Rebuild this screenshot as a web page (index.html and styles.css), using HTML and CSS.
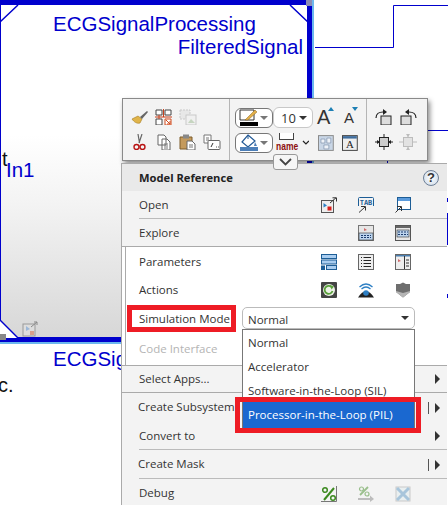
FILE: index.html
```html
<!DOCTYPE html>
<html lang="en">
<head>
    <meta charset="UTF-8">
    <meta name="viewport" content="width=device-width, initial-scale=1.0">
    <title>Model Reference menu</title>
    <link rel="stylesheet" href="styles.css">
</head>
<body>
<div class="stage">

    <!-- diagram behind the menu -->
    <div class="block">
        <svg class="corners" width="316" height="345" viewBox="0 0 316 345">
            <path d="M0 22 L18 5 M290 5 L310 24" stroke="#0000cd" stroke-width="1.5" fill="none"/>
            <path d="M0 320 L18 338 L0 338 Z" fill="#fff"/>
            <path d="M0 320 L18 338" stroke="#0000cd" stroke-width="1.5" fill="none"/>
        </svg>
        <div class="block-name">ECGSignalProcessing</div>
        <div class="block-port">FilteredSignal</div>
        <svg class="ref-badge" width="17" height="16" viewBox="0 0 17 16">
            <rect x="1" y="3" width="12" height="12" fill="#ddd" stroke="#999"/>
            <path d="M4 5 L8 8 L4 10 Z" fill="#9db8d8"/>
            <rect x="8" y="10" width="4" height="4" fill="#d9a08c"/>
            <path d="M9 6 L15 1 M12 1 H15 V4" stroke="#888" fill="none"/>
        </svg>
        <span class="handle handle-tr"></span>
        <span class="handle handle-bl"></span>
    </div>
    <div class="in-label">In1</div>
    <div class="cut-text cut-t">t</div>
    <div class="name-below">ECGSignalProcessing</div>
    <div class="cut-text cut-c">c.</div>
    <svg class="wires" width="448" height="505" viewBox="0 0 448 505">
        <path d="M315 47.5 H393.5 V5.5 H448 M428 130.5 H448 M387.5 160 V164 M447.5 198 V202 M447.5 294 V298" stroke="#0000cd" fill="none"/>
        <path d="M447.5 213 V245" stroke="#0000cd" stroke-width="2" fill="none"/>
    </svg>

    <!-- floating format toolbar -->
    <div class="toolbar">
        <div class="tool-group group-edit">
            <svg class="ti" viewBox="0 0 18 16"><path d="M7 7 L1 10 C3 13 6 15 9 14 L11 10 Z" fill="#e0b44a" stroke="#a67c20" stroke-width=".6"/><path d="M9 8 L16 2 L17 3 L11 10 Z" fill="#666"/></svg>
            <svg class="ti" viewBox="0 0 18 16"><path d="M1 6 H7 V1 H1 Z M10 1 H16 V6 H10 Z M1 10 H7 V16 H1 Z" fill="#fff" stroke="#444"/><path d="M8.5 0 V8 M0 8 H17 M4 6 V10" stroke="#c8401c" fill="none"/><path d="M10 10 H16 V16 H10 Z" fill="#fff" stroke="#d04a1c"/><path d="M11 11 L15 15 M12 15 H15 V12" stroke="#d04a1c" fill="none"/></svg>
            <svg class="ti ti-off" viewBox="0 0 18 16"><path d="M1 1 H11 V10 H1 Z" fill="#e4e4e4" stroke="#bbb" stroke-dasharray="2 1"/><rect x="7" y="6" width="10" height="10" fill="#f0f0f0" stroke="#bbb"/><path d="M9 14 L12 10 L16 14 Z" fill="#b8ccb0"/></svg>
            <span class="ti"></span>
            <svg class="ti" viewBox="0 0 18 16"><path d="M11 0 L8 9 M7 0 L8.5 9" stroke="#666" stroke-width="1.2" fill="none"/><circle cx="5.5" cy="13" r="2.5" fill="none" stroke="#b81414" stroke-width="1.4"/><circle cx="11.5" cy="13" r="2.5" fill="none" stroke="#b81414" stroke-width="1.4"/></svg>
            <svg class="ti" viewBox="0 0 18 16"><path d="M3 1 H9 L11 3 V11 H3 Z M7 5 H12 L15 8 V16 H7 Z" fill="#fff" stroke="#666"/><path d="M9 10 H13 M9 12 H13 M9 14 H13" stroke="#777"/></svg>
            <svg class="ti" viewBox="0 0 18 16"><path d="M1 3 H13 V15 H1 Z" fill="#c49a5c" stroke="#7d5c2a"/><rect x="4" y="0.5" width="6" height="4" fill="#888"/><path d="M8 7 H13 L16 10 V16 H8 Z" fill="#fff" stroke="#666"/><path d="M10 11 H14 M10 13 H14" stroke="#777"/></svg>
            <svg class="ti" viewBox="0 0 18 16"><path d="M1 1 H8 V9 H1 Z" fill="#fff" stroke="#777"/><path d="M3 4 H6 M3 6 H6" stroke="#777"/><rect x="5" y="6.5" width="12" height="9" rx="1" fill="#fff" stroke="#666"/><path d="M8 13 L10 9 M13 13 H13.8 M15 13 H15.8" stroke="#333"/></svg>
        </div>
        <div class="tool-group group-format">
            <div class="tool-row">
                <div class="pick">
                    <svg width="20" height="18" viewBox="0 0 20 18"><path d="M1 1 H15 V11 H1 Z" fill="#fff" stroke="#333"/><path d="M6 11 L16 1 L18 3 L9 11 Z" fill="#e2b04a" stroke="#8a6420" stroke-width=".5"/><rect x="1" y="13" width="18" height="4" fill="#000"/></svg>
                    <span class="caret"></span>
                </div>
                <div class="pick pick-size"><span>10</span><span class="caret caret-dark"></span></div>
                <div class="font-btn">A<span class="up"></span></div>
                <div class="font-btn font-small">A<span class="down"></span></div>
            </div>
            <div class="tool-row">
                <div class="pick">
                    <svg width="20" height="18" viewBox="0 0 20 18"><path d="M9 1 L16 7 L9 13 L3 8 Z" fill="#fff" stroke="#245a96" stroke-width="1.2"/><path d="M9 5 V1" stroke="#245a96"/><rect x="1" y="13" width="18" height="4" fill="#4d7fb8"/><path d="M16 8 L18 12 H15 Z" fill="#4d7fb8"/></svg>
                    <span class="caret"></span>
                </div>
                <div class="name-btn"><span class="name-box"></span><span class="name-text">name</span></div>
                <svg class="mini-chev" width="8" height="5" viewBox="0 0 8 5"><path d="M1 1 L4 4 L7 1" stroke="#222" stroke-width="1.2" fill="none"/></svg>
                <svg class="ti sq" viewBox="0 0 16 16"><rect x=".5" y=".5" width="15" height="15" fill="#c9d6e6" stroke="#8a8a8a"/><path d="M3 4 H7 V8 H3 Z M9 3 H13 V8 H9 Z M6 10 H11 V14 H6 Z" fill="#eef2f8" stroke="#7d90aa" stroke-width=".7"/></svg>
                <svg class="ti sq" viewBox="0 0 16 16"><rect x=".5" y=".5" width="15" height="15" fill="#eee" stroke="#444"/><rect x="1" y="1" width="14" height="2.5" fill="#3f6d9e"/><text x="8" y="13.5" class="svg-a">A</text></svg>
            </div>
        </div>
        <div class="tool-group group-rotate">
            <svg class="ti" viewBox="0 0 18 16"><rect x="6" y="7" width="10" height="9" fill="#ddd" stroke="#222"/><path d="M1 9 C1 5 4 3 8 3" stroke="#222" stroke-width="1.2" fill="none"/><path d="M8 0 L12 3 L8 6 Z" fill="#222"/></svg>
            <svg class="ti" viewBox="0 0 18 16"><rect x="2" y="7" width="10" height="9" fill="#ddd" stroke="#222"/><path d="M17 9 C17 5 14 3 10 3" stroke="#222" stroke-width="1.2" fill="none"/><path d="M10 0 L6 3 L10 6 Z" fill="#222"/></svg>
            <svg class="ti" viewBox="0 0 18 16"><rect x="4.5" y="3.5" width="9" height="9" fill="#ccc" stroke="#222"/><path d="M9 0 V3 M9 13 V16 M0 8 H4 M14 8 H18" stroke="#222"/><path d="M2 6 L5 8 L2 10 Z M16 6 L13 8 L16 10 Z" fill="#222"/></svg>
            <svg class="ti ti-off" viewBox="0 0 18 16"><rect x="4.5" y="3.5" width="9" height="9" fill="#ddd" stroke="#aaa"/><path d="M9 0 V3 M9 13 V16 M0 8 H4 M14 8 H18" stroke="#aaa"/><path d="M7 0 H11 L9 3 Z M7 16 H11 L9 13 Z" fill="#aaa"/></svg>
        </div>
    </div>

    <!-- context menu -->
    <div class="menu">
        <div class="menu-head">
            <span>Model Reference</span>
            <span class="help">?</span>
        </div>
        <div class="menu-row row-open">
            <span class="label">Open</span>
            <svg class="mi" viewBox="0 0 16 16"><rect x=".5" y="3.5" width="12" height="12" fill="#eee" stroke="#555"/><path d="M2.5 6 L6 8.5 L2.5 10.5 Z" fill="#2d7fc4"/><rect x="6.5" y="9.5" width="4" height="4" fill="#d8201c"/><path d="M9 6 L15 .8 M11.5 .8 H15.5 V4.5" stroke="#333" fill="none"/></svg>
            <svg class="mi" viewBox="0 0 16 16"><path d="M.5 9 V1.5 Q.5 .5 1.5 .5 H14.5 Q15.5 .5 15.5 1.5 V9" stroke="#1d5d96" fill="none"/><text x="8" y="7.5" class="svg-tab">TAB</text><path d="M1 15.5 L7 10 M3 9.5 H7.5 V13.5" stroke="#333" fill="none"/></svg>
            <svg class="mi" viewBox="0 0 16 16"><rect x="2.5" y=".5" width="13" height="12" fill="#fff" stroke="#1d5d96"/><rect x="3" y="1" width="12" height="3" fill="#5b9bdc"/><path d="M.5 15.5 L6 10 M2 9.5 H6.5 V14" stroke="#333" fill="none"/></svg>
        </div>
        <div class="menu-row row-explore">
            <span class="label">Explore</span>
            <span class="mi"></span>
            <svg class="mi" viewBox="0 0 16 16"><rect x=".5" y=".5" width="15" height="15" fill="#e6e6e6" stroke="#777"/><path d="M6 3 L9 5 L6 6 Z" fill="#d06a6a"/><rect x="1" y="8" width="14" height="7" fill="#bcd4ee" stroke="#333" stroke-width=".6"/><path d="M3 10.5 H13 M3 12.5 H13" stroke="#1d3d6e" stroke-dasharray="2 1"/></svg>
            <svg class="mi" viewBox="0 0 16 16"><rect x=".5" y=".5" width="15" height="15" fill="#e6e6e6" stroke="#555"/><rect x="1" y="1" width="14" height="2" fill="#666"/><rect x="2" y="5" width="12" height="7" fill="#bcd4ee" stroke="#333" stroke-width=".6"/><path d="M3 7 H13 M3 9.5 H13" stroke="#1d3d6e" stroke-dasharray="2 1"/></svg>
        </div>
        <div class="menu-panel">
            <div class="menu-row row-params">
                <span class="label">Parameters</span>
                <svg class="mi" viewBox="0 0 16 16"><rect x=".5" y=".5" width="15" height="4" fill="#a9cdf0" stroke="#1d5d96"/><rect x=".5" y="6" width="15" height="4" fill="#a9cdf0" stroke="#1d5d96"/><rect x="0" y="11.5" width="4" height="4.5" fill="#1d5d96"/><rect x="5.5" y="11.5" width="10" height="4" fill="#a9cdf0" stroke="#1d5d96"/></svg>
                <svg class="mi" viewBox="0 0 16 16"><rect x=".5" y=".5" width="15" height="15" fill="#eee" stroke="#666"/><path d="M3 3.5 H4 M5.5 3.5 H13 M3 6.5 H4 M5.5 6.5 H13 M3 9.5 H4 M5.5 9.5 H13 M3 12.5 H4 M5.5 12.5 H13" stroke="#222"/></svg>
                <svg class="mi" viewBox="0 0 16 16"><rect x=".5" y=".5" width="15" height="15" fill="#eee" stroke="#666"/><rect x="1" y="1" width="14" height="1.5" fill="#4a7fb0"/><path d="M3 5 L6 7 L3 8 Z" fill="#d06a6a"/><path d="M9.5 2 V15 M11 6 H14 M11 9 H14 M11 12 H14" stroke="#333"/></svg>
            </div>
            <div class="menu-row row-actions">
                <span class="label">Actions</span>
                <svg class="mi" viewBox="0 0 16 16"><rect width="16" height="16" rx="1" fill="#444"/><circle cx="8" cy="8" r="6" fill="#eef3e8"/><path d="M11.5 9 A4 4 0 1 1 10.5 5" stroke="#5aa03c" stroke-width="1.8" fill="none"/><path d="M9 3 L13 4.5 L10.5 7.5 Z" fill="#5aa03c"/></svg>
                <svg class="mi" viewBox="0 0 16 16"><path d="M1.5 5 Q8 -1 14.5 5 M3.5 7 Q8 3 12.5 7" stroke="#2d7fc4" stroke-width="1.3" fill="none"/><path d="M0 15.5 Q8 3 16 15.5 Z" fill="#222"/><circle cx="8" cy="11" r="2.8" fill="#2d7fc4"/></svg>
                <svg class="mi" viewBox="0 0 16 16"><path d="M1 2 L5 2 L8 .5 L11 2 L15 2 V10 L8 15.5 L1 10 Z" fill="#6e6e6e"/><path d="M1 9 L8 11 L15 9 V10 L8 15.5 L1 10 Z" fill="#b5b5b5"/></svg>
            </div>
            <div class="menu-row row-mode"><span class="label">Simulation Mode</span></div>
            <div class="menu-row row-code"><span class="label label-off">Code Interface</span></div>
        </div>
        <div class="menu-row row-apps">
            <span class="label">Select Apps...</span>
            <span class="arrow"></span>
        </div>
        <div class="menu-row row-sub row-split">
            <span class="label label-tight">Create Subsystem</span>
            <span class="arrow"></span>
        </div>
        <div class="menu-row row-convert">
            <span class="label">Convert to</span>
            <span class="arrow"></span>
        </div>
        <div class="menu-row row-mask row-split">
            <span class="label label-tight">Create Mask</span>
            <span class="arrow"></span>
        </div>
        <div class="menu-row row-debug">
            <span class="label">Debug</span>
            <svg class="mi" viewBox="0 0 16 16"><rect x=".5" y=".5" width="15" height="15" fill="#f4f4f4"/><path d="M15.5 0 V15.5 H0" stroke="#777" fill="none"/><path d="M3 14 L13 2" stroke="#3c8a20" stroke-width="2"/><circle cx="4" cy="4" r="2.3" fill="none" stroke="#3c8a20" stroke-width="1.5"/><circle cx="12" cy="12" r="2.3" fill="none" stroke="#3c8a20" stroke-width="1.5"/></svg>
            <svg class="mi ti-off" viewBox="0 0 16 16"><path d="M2 9 L10 1" stroke="#7cae6a" stroke-width="1.8"/><circle cx="3.5" cy="3" r="2" fill="none" stroke="#7cae6a" stroke-width="1.2"/><circle cx="9" cy="8" r="2" fill="none" stroke="#7cae6a" stroke-width="1.2"/><path d="M0 13 H12" stroke="#aaa" stroke-width="2"/><path d="M12 9.5 L16 13 L12 16 Z" fill="#aaa"/></svg>
            <svg class="mi ti-off" viewBox="0 0 16 16"><rect x="1" y="1" width="14" height="14" fill="#e6eef0" stroke="#bbb"/><path d="M2 2 L14 14 M14 2 L2 14" stroke="#8fb6d4" stroke-width="3"/></svg>
        </div>
    </div>

    <div class="chevron-tab">
        <svg width="13" height="8" viewBox="0 0 13 8"><path d="M1 1 L6.5 6.5 L12 1" stroke="#444" stroke-width="1.8" fill="none"/></svg>
    </div>

    <!-- open combo with its list -->
    <div class="combo"><span>Normal</span><span class="caret caret-dark"></span></div>
    <ul class="combo-list">
        <li>Normal</li>
        <li>Accelerator</li>
        <li>Software-in-the-Loop (SIL)</li>
        <li class="selected">Processor-in-the-Loop (PIL)</li>
    </ul>

    <!-- red annotation boxes -->
    <div class="mark mark-label"></div>
    <div class="mark mark-item"></div>
</div>
</body>
</html>
```

FILE: styles.css
```css
html, body {
    margin: 0;
    padding: 0;
    background: #fff;
}

.stage {
    position: relative;
    width: 448px;
    height: 505px;
    overflow: hidden;
    font-family: "Open Sans", "Noto Sans", sans-serif;
    font-size: 11.5px;
    color: #333;
}

/* diagram */
.block {
    position: absolute;
    left: 0;
    top: 0;
    box-sizing: border-box;
    width: 312px;
    height: 342px;
    border-top: 5px solid #0000cd;
    border-bottom: 5px solid #0000cd;
    border-right: 5px solid #0000cd;
    border-left: 1px solid #0000cd;
    box-shadow: 2px 0 0 #6cb8ee, 0 2px 0 #6cb8ee;
    background: linear-gradient(#fff 0, #fff 130px, #f3f3f3 200px, #d6d6d6 337px);
    font-family: "Liberation Sans", Arial, sans-serif;
    font-size: 20.5px;
    color: #0000cd;
}

.corners {
    position: absolute;
    left: -1px;
    top: -5px;
}

.block-name {
    position: absolute;
    left: 52px;
    top: 7px;
    white-space: nowrap;
}

.block-port {
    position: absolute;
    right: 4px;
    top: 30px;
    white-space: nowrap;
}

.ref-badge {
    position: absolute;
    left: 21px;
    top: 316px;
}

.handle {
    position: absolute;
    width: 6px;
    height: 6px;
    background: #8c8cb4;
}

.handle-tr {
    right: -5px;
    top: -5px;
}

.handle-bl {
    left: -1px;
    bottom: -3px;
    background: #888;
}

.in-label,
.name-below {
    position: absolute;
    font-family: "Liberation Sans", Arial, sans-serif;
    font-size: 20.5px;
    color: #0000cd;
    white-space: nowrap;
}

.in-label {
    left: 6px;
    top: 158px;
}

.name-below {
    left: 53px;
    top: 347px;
    width: 68px;
    overflow: hidden;
}

.cut-text {
    position: absolute;
    font-family: "Liberation Sans", Arial, sans-serif;
    font-size: 20px;
    color: #111;
}

.cut-t {
    left: 2px;
    top: 148px;
}

.cut-c {
    left: -2px;
    top: 374px;
}

.wires {
    position: absolute;
    left: 0;
    top: 0;
}

/* toolbar */
.toolbar {
    position: absolute;
    left: 122px;
    top: 98px;
    width: 306px;
    height: 63px;
    box-sizing: border-box;
    display: flex;
    background: #f3f3f3;
    border: 1px solid #8a8a8a;
    box-shadow: 2px 3px 5px rgba(0, 0, 0, 0.45);
}

.tool-group {
    box-sizing: border-box;
    height: 100%;
    padding-top: 10px;
    border-right: 1px solid #b5b5b5;
}

.group-edit {
    width: 107px;
    padding-left: 8px;
    display: grid;
    grid-template-columns: repeat(4, 24px);
    grid-template-rows: 16px 16px;
    row-gap: 9px;
}

.group-format {
    width: 137px;
    padding-left: 5px;
    padding-top: 8px;
    display: flex;
    flex-direction: column;
    gap: 4px;
}

.group-rotate {
    width: 60px;
    padding-left: 8px;
    border-right: none;
    display: grid;
    grid-template-columns: repeat(2, 24px);
    grid-template-rows: 16px 16px;
    row-gap: 9px;
}

.ti {
    display: block;
    width: 18px;
    height: 16px;
}

.ti-off {
    opacity: 0.75;
}

.tool-row {
    display: flex;
    align-items: center;
    height: 21px;
}

.pick {
    box-sizing: border-box;
    width: 38px;
    height: 20px;
    display: flex;
    align-items: center;
    justify-content: space-between;
    padding: 0 4px 0 3px;
    background: #fff;
    border: 1px solid #777;
    border-radius: 6px;
}

.pick-size {
    width: 40px;
    height: 21px;
    padding: 0 5px 0 7px;
    border-color: #c8c8c8;
    font-size: 13px;
}

.caret {
    width: 0;
    height: 0;
    border-left: 4px solid transparent;
    border-right: 4px solid transparent;
    border-top: 4px solid #777;
}

.caret-dark {
    border-top-color: #333;
}

.font-btn {
    position: relative;
    box-sizing: border-box;
    width: 24px;
    margin-left: 4px;
    padding-left: 0;
    font-family: "Liberation Sans", Arial, sans-serif;
    font-size: 20px;
    line-height: 21px;
    color: #333;
}

.font-small {
    font-size: 15px;
    margin-left: 0;
    padding-left: 3px;
}

.up,
.down {
    position: absolute;
    top: 0;
    left: 11px;
    width: 0;
    height: 0;
    border-left: 3px solid transparent;
    border-right: 3px solid transparent;
}

.up {
    border-bottom: 4px solid #1d7fb4;
}

.down {
    border-top: 4px solid #1d7fb4;
}

.name-btn {
    width: 16px;
    margin-left: 6px;
    display: flex;
    flex-direction: column;
    align-items: center;
}

.name-box {
    box-sizing: border-box;
    width: 15px;
    height: 7px;
    background: #fff;
    border: 1px solid #444;
    border-top: none;
}

.name-text {
    font-family: "Liberation Sans", Arial, sans-serif;
    font-size: 10px;
    line-height: 11px;
    margin-top: 1px;
    color: #8c0e0e;
    font-weight: bold;
    transform: scaleX(0.85);
}

.mini-chev {
    margin-left: 7px;
    margin-right: 9px;
}

.sq {
    width: 16px;
    margin-right: 8px;
}

.svg-a {
    font-family: "Liberation Serif", serif;
    font-size: 11px;
    text-anchor: middle;
    fill: #222;
}

.chevron-tab {
    position: absolute;
    left: 273px;
    top: 154px;
    width: 25px;
    height: 16px;
    box-sizing: border-box;
    display: flex;
    align-items: center;
    justify-content: center;
    background: #f6f6f6;
    border: 1px solid #999;
    border-radius: 3px;
}

/* context menu */
.menu {
    position: absolute;
    left: 121px;
    top: 163px;
    width: 326px;
    height: 345px;
    box-sizing: border-box;
    background: #f3f3f3;
    border-left: 1px solid #aaa;
    border-top: 1px solid #aaa;
}

.menu-head {
    height: 27px;
    display: flex;
    align-items: center;
    justify-content: space-between;
    padding: 0 8px 0 17px;
    background: #e9e9e9;
    font-size: 11.2px;
    font-weight: bold;
    color: #222;
}

.help {
    box-sizing: border-box;
    width: 16px;
    height: 16px;
    border-radius: 50%;
    background: radial-gradient(#fff, #c9d8e8);
    border: 1px solid #6d7f96;
    font-family: "Liberation Sans", Arial, sans-serif;
    font-size: 13px;
    font-weight: bold;
    line-height: 14px;
    text-align: center;
    color: #333;
}

.menu-row {
    position: relative;
    display: grid;
    grid-template-columns: 199px 37px 37px 37px;
    align-items: center;
    box-sizing: border-box;
}

.label {
    padding-left: 17px;
    margin-bottom: 2px;
    white-space: nowrap;
}

.label-tight {
    padding-left: 16px;
}

.label-off {
    color: #b4b4b4;
}

.mi {
    display: block;
    width: 16px;
    height: 16px;
}

.row-open {
    height: 28px;
}

.row-open::after,
.row-convert::after,
.row-mask::after {
    content: "";
    position: absolute;
    left: 17px;
    right: 0;
    bottom: 0;
    border-bottom: 1px solid #bbb;
}

.row-explore {
    height: 27px;
    padding-top: 1px;
}

.menu-panel {
    position: relative;
    box-sizing: border-box;
    height: 120px;
    padding-top: 1px;
    background: #fff;
    border-top: 1px solid #aaa;
    border-bottom: 1px solid #aaa;
}

.menu-panel::before {
    content: "";
    position: absolute;
    left: 3px;
    top: 0;
    bottom: 0;
    border-left: 1px solid #aaa;
}

.row-params {
    height: 28px;
}

.row-actions {
    height: 28px;
}

.row-mode {
    height: 30px;
}

.row-code {
    height: 31px;
}

.row-apps {
    height: 27px;
    border-bottom: 1px solid #aaa;
}

.row-sub {
    height: 29px;
}

.row-convert {
    height: 28px;
}

.row-mask {
    height: 29px;
}

.row-debug {
    height: 29px;
}

.arrow {
    position: absolute;
    left: 313px;
    top: 50%;
    margin-top: -5px;
    width: 0;
    height: 0;
    border-top: 5px solid transparent;
    border-bottom: 5px solid transparent;
    border-left: 5px solid #333;
}

.row-split::before {
    content: "";
    position: absolute;
    left: 306px;
    top: 50%;
    margin-top: -6px;
    height: 12px;
    border-left: 1px solid #555;
}

/* combo and list */
.combo {
    position: absolute;
    left: 242px;
    top: 307px;
    width: 173px;
    height: 22px;
    box-sizing: border-box;
    display: flex;
    align-items: center;
    justify-content: space-between;
    padding: 3px 5px 0 5px;
    background: #fff;
    border: 1px solid #bbb;
    border-radius: 5px;
}

.combo .caret {
    margin-top: -3px;
}

.combo-list {
    position: absolute;
    left: 242px;
    top: 329px;
    width: 173px;
    margin: 0;
    padding: 1px 0 0;
    box-sizing: border-box;
    list-style: none;
    background: #fff;
    border: 1px solid #777;
}

.combo-list li {
    height: 24px;
    line-height: 24px;
    padding-left: 5px;
    white-space: nowrap;
}

.combo-list .selected {
    height: 26px;
    margin-top: -1px;
    line-height: 26px;
    background: #1a68d0;
    color: #fff;
}

.mark {
    position: absolute;
    box-sizing: border-box;
    border: 5px solid #ee1c25;
}

.mark-label {
    left: 127px;
    top: 305px;
    width: 109px;
    height: 27px;
}

.mark-item {
    left: 235px;
    top: 397px;
    width: 186px;
    height: 36px;
}

.svg-tab {
    font-family: "DejaVu Sans Mono", monospace;
    font-size: 7px;
    font-weight: bold;
    text-anchor: middle;
    fill: #1d5d96;
}
```
